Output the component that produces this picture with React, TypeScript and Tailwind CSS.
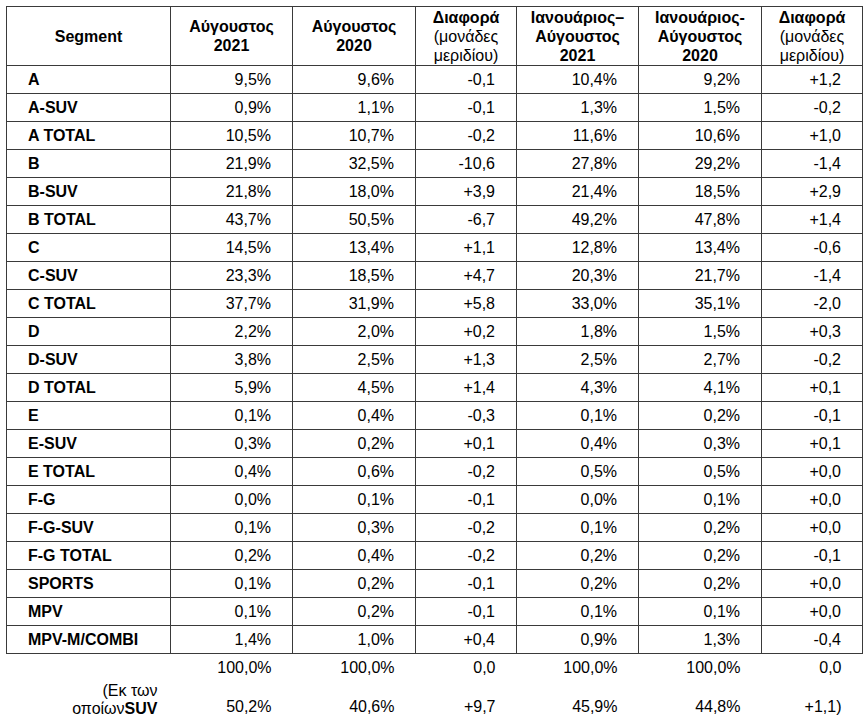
import React from "react";

const rows: [string, string, string, string, string, string, string][] = [
  ["A", "9,5%", "9,6%", "-0,1", "10,4%", "9,2%", "+1,2"],
  ["A-SUV", "0,9%", "1,1%", "-0,1", "1,3%", "1,5%", "-0,2"],
  ["A TOTAL", "10,5%", "10,7%", "-0,2", "11,6%", "10,6%", "+1,0"],
  ["B", "21,9%", "32,5%", "-10,6", "27,8%", "29,2%", "-1,4"],
  ["B-SUV", "21,8%", "18,0%", "+3,9", "21,4%", "18,5%", "+2,9"],
  ["B TOTAL", "43,7%", "50,5%", "-6,7", "49,2%", "47,8%", "+1,4"],
  ["C", "14,5%", "13,4%", "+1,1", "12,8%", "13,4%", "-0,6"],
  ["C-SUV", "23,3%", "18,5%", "+4,7", "20,3%", "21,7%", "-1,4"],
  ["C TOTAL", "37,7%", "31,9%", "+5,8", "33,0%", "35,1%", "-2,0"],
  ["D", "2,2%", "2,0%", "+0,2", "1,8%", "1,5%", "+0,3"],
  ["D-SUV", "3,8%", "2,5%", "+1,3", "2,5%", "2,7%", "-0,2"],
  ["D TOTAL", "5,9%", "4,5%", "+1,4", "4,3%", "4,1%", "+0,1"],
  ["E", "0,1%", "0,4%", "-0,3", "0,1%", "0,2%", "-0,1"],
  ["E-SUV", "0,3%", "0,2%", "+0,1", "0,4%", "0,3%", "+0,1"],
  ["E TOTAL", "0,4%", "0,6%", "-0,2", "0,5%", "0,5%", "+0,0"],
  ["F-G", "0,0%", "0,1%", "-0,1", "0,0%", "0,1%", "+0,0"],
  ["F-G-SUV", "0,1%", "0,3%", "-0,2", "0,1%", "0,2%", "+0,0"],
  ["F-G TOTAL", "0,2%", "0,4%", "-0,2", "0,2%", "0,2%", "-0,1"],
  ["SPORTS", "0,1%", "0,2%", "-0,1", "0,2%", "0,2%", "+0,0"],
  ["MPV", "0,1%", "0,2%", "-0,1", "0,1%", "0,1%", "+0,0"],
  ["MPV-M/COMBI", "1,4%", "1,0%", "+0,4", "0,9%", "1,3%", "-0,4"],
];

const widths = [164, 122, 123, 101, 122, 123, 101];

const cell = "border border-[#3a3a3a] p-0";

export default function App() {
  return (
    <div
      className="w-[868px] h-[722px] bg-white text-black overflow-hidden pt-[6px] pl-[6px]"
      style={{ fontFamily: '"Liberation Sans", Arial, sans-serif' }}
    >
      <table className="border-collapse table-fixed text-[16px] leading-[19px]">
        <colgroup>
          {widths.map((w, i) => (
            <col key={i} style={{ width: w }} />
          ))}
        </colgroup>
        <thead>
          <tr className="h-[59px]">
            <th className={`${cell} font-bold text-center align-middle`}>Segment</th>
            <th className={`${cell} font-bold text-center align-middle`}>
              Αύγουστος
              <br />
              2021
            </th>
            <th className={`${cell} font-bold text-center align-middle`}>
              Αύγουστος
              <br />
              2020
            </th>
            <th className={`${cell} text-center align-middle`}>
              <span className="font-bold">Διαφορά</span>
              <br />
              <span className="font-normal">(μονάδες</span>
              <br />
              <span className="font-normal">μεριδίου)</span>
            </th>
            <th className={`${cell} font-bold text-center align-middle`}>
              Ιανουάριος–
              <br />
              Αύγουστος
              <br />
              2021
            </th>
            <th className={`${cell} font-bold text-center align-middle`}>
              Ιανουάριος-
              <br />
              Αύγουστος
              <br />
              2020
            </th>
            <th className={`${cell} text-center align-middle`}>
              <span className="font-bold">Διαφορά</span>
              <br />
              <span className="font-normal">(μονάδες</span>
              <br />
              <span className="font-normal">μεριδίου)</span>
            </th>
          </tr>
        </thead>
        <tbody>
          {rows.map((r) => (
            <tr key={r[0]} className="h-[28px]">
              <td className={`${cell} font-bold text-left pl-[21px] align-middle`}>{r[0]}</td>
              {r.slice(1).map((v, i) => (
                <td key={i} className={`${cell} text-right pr-[21px] align-middle`}>
                  {v}
                </td>
              ))}
            </tr>
          ))}
          <tr className="h-[28px]">
            <td></td>
            {["100,0%", "100,0%", "0,0", "100,0%", "100,0%", "0,0"].map((v, i) => (
              <td key={i} className="text-right pr-[21px] align-middle">
                {v}
              </td>
            ))}
          </tr>
          <tr>
            <td className="text-right pr-[13px] align-top leading-[18px]">
              (Εκ των
              <br />
              οποίων<span className="font-bold">SUV</span>
            </td>
            {["50,2%", "40,6%", "+9,7", "45,9%", "44,8%", "+1,1)"].map((v, i) => (
              <td key={i} className="text-right pr-[21px] align-bottom pb-[2px]">
                {v}
              </td>
            ))}
          </tr>
        </tbody>
      </table>
    </div>
  );
}
